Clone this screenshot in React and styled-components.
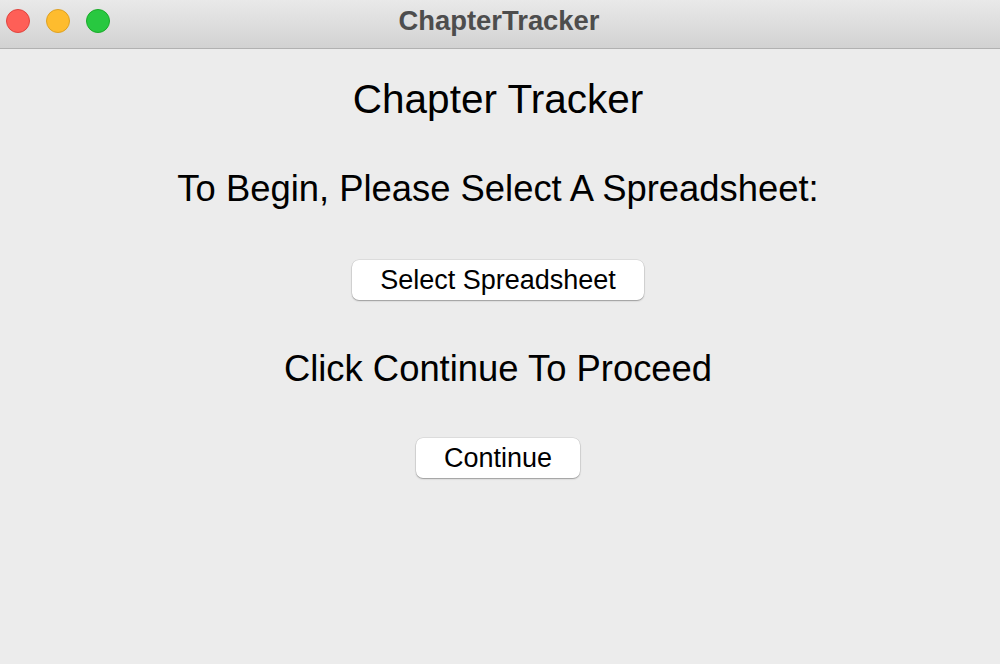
import React from "react";
import styled, { createGlobalStyle } from "styled-components";

const GlobalStyle = createGlobalStyle`
  html, body {
    margin: 0;
    padding: 0;
    background: #ececec;
  }
  body {
    font-family: "Liberation Sans", Arial, sans-serif;
  }
`;

const Window = styled.div`
  width: 1000px;
  height: 664px;
  display: flex;
  flex-direction: column;
  background: #ececec;
  overflow: hidden;
`;

const TitleBar = styled.div`
  position: relative;
  height: 48px;
  flex-shrink: 0;
  display: flex;
  align-items: center;
  justify-content: center;
  background: linear-gradient(#e9e9e9, #d2d2d2);
  border-bottom: 1px solid #b1b1b1;
`;

const Lights = styled.div`
  position: absolute;
  left: 6px;
  top: 9px;
  display: flex;
  gap: 16px;
`;

const Light = styled.span`
  width: 24px;
  height: 24px;
  border-radius: 50%;
  box-sizing: border-box;
  background: ${(p) => p.fill};
  border: 1px solid ${(p) => p.edge};
`;

const WindowTitle = styled.div`
  font-size: 27.4px;
  font-weight: bold;
  color: #4d4d4d;
  margin-top: -6px;
  margin-right: 2px;
`;

const Content = styled.div`
  display: flex;
  flex-direction: column;
  align-items: center;
  padding-top: 30px;
  padding-right: 4px;
`;

const Heading = styled.h1`
  margin: 0;
  font-size: 40.5px;
  line-height: 40px;
  font-weight: normal;
  color: #000;
`;

const Prompt = styled.p`
  margin: ${(p) => p.top}px 0 0;
  font-size: 36.4px;
  line-height: 36px;
  color: #000;
`;

const Button = styled.button`
  margin-top: ${(p) => p.top}px;
  width: ${(p) => p.w}px;
  height: 40px;
  padding: 0;
  border: none;
  border-radius: 7px;
  background: #fff;
  box-shadow: 0 0 0 0.5px rgba(0, 0, 0, 0.12), 0 1px 1.5px rgba(0, 0, 0, 0.3);
  font-family: "Liberation Sans", Arial, sans-serif;
  font-size: 27px;
  color: #000;
  cursor: pointer;
`;

export default function App() {
  return (
    <Window>
      <GlobalStyle />
      <TitleBar>
        <Lights>
          <Light fill="#fe5f57" edge="#e0443e" />
          <Light fill="#febc2e" edge="#dea123" />
          <Light fill="#28c840" edge="#1aab29" />
        </Lights>
        <WindowTitle>ChapterTracker</WindowTitle>
      </TitleBar>
      <Content>
        <Heading>Chapter Tracker</Heading>
        <Prompt top={52}>To Begin, Please Select A Spreadsheet:</Prompt>
        <Button top={53} w={292}>Select Spreadsheet</Button>
        <Prompt top={51}>Click Continue To Proceed</Prompt>
        <Button top={51} w={164}>Continue</Button>
      </Content>
    </Window>
  );
}
